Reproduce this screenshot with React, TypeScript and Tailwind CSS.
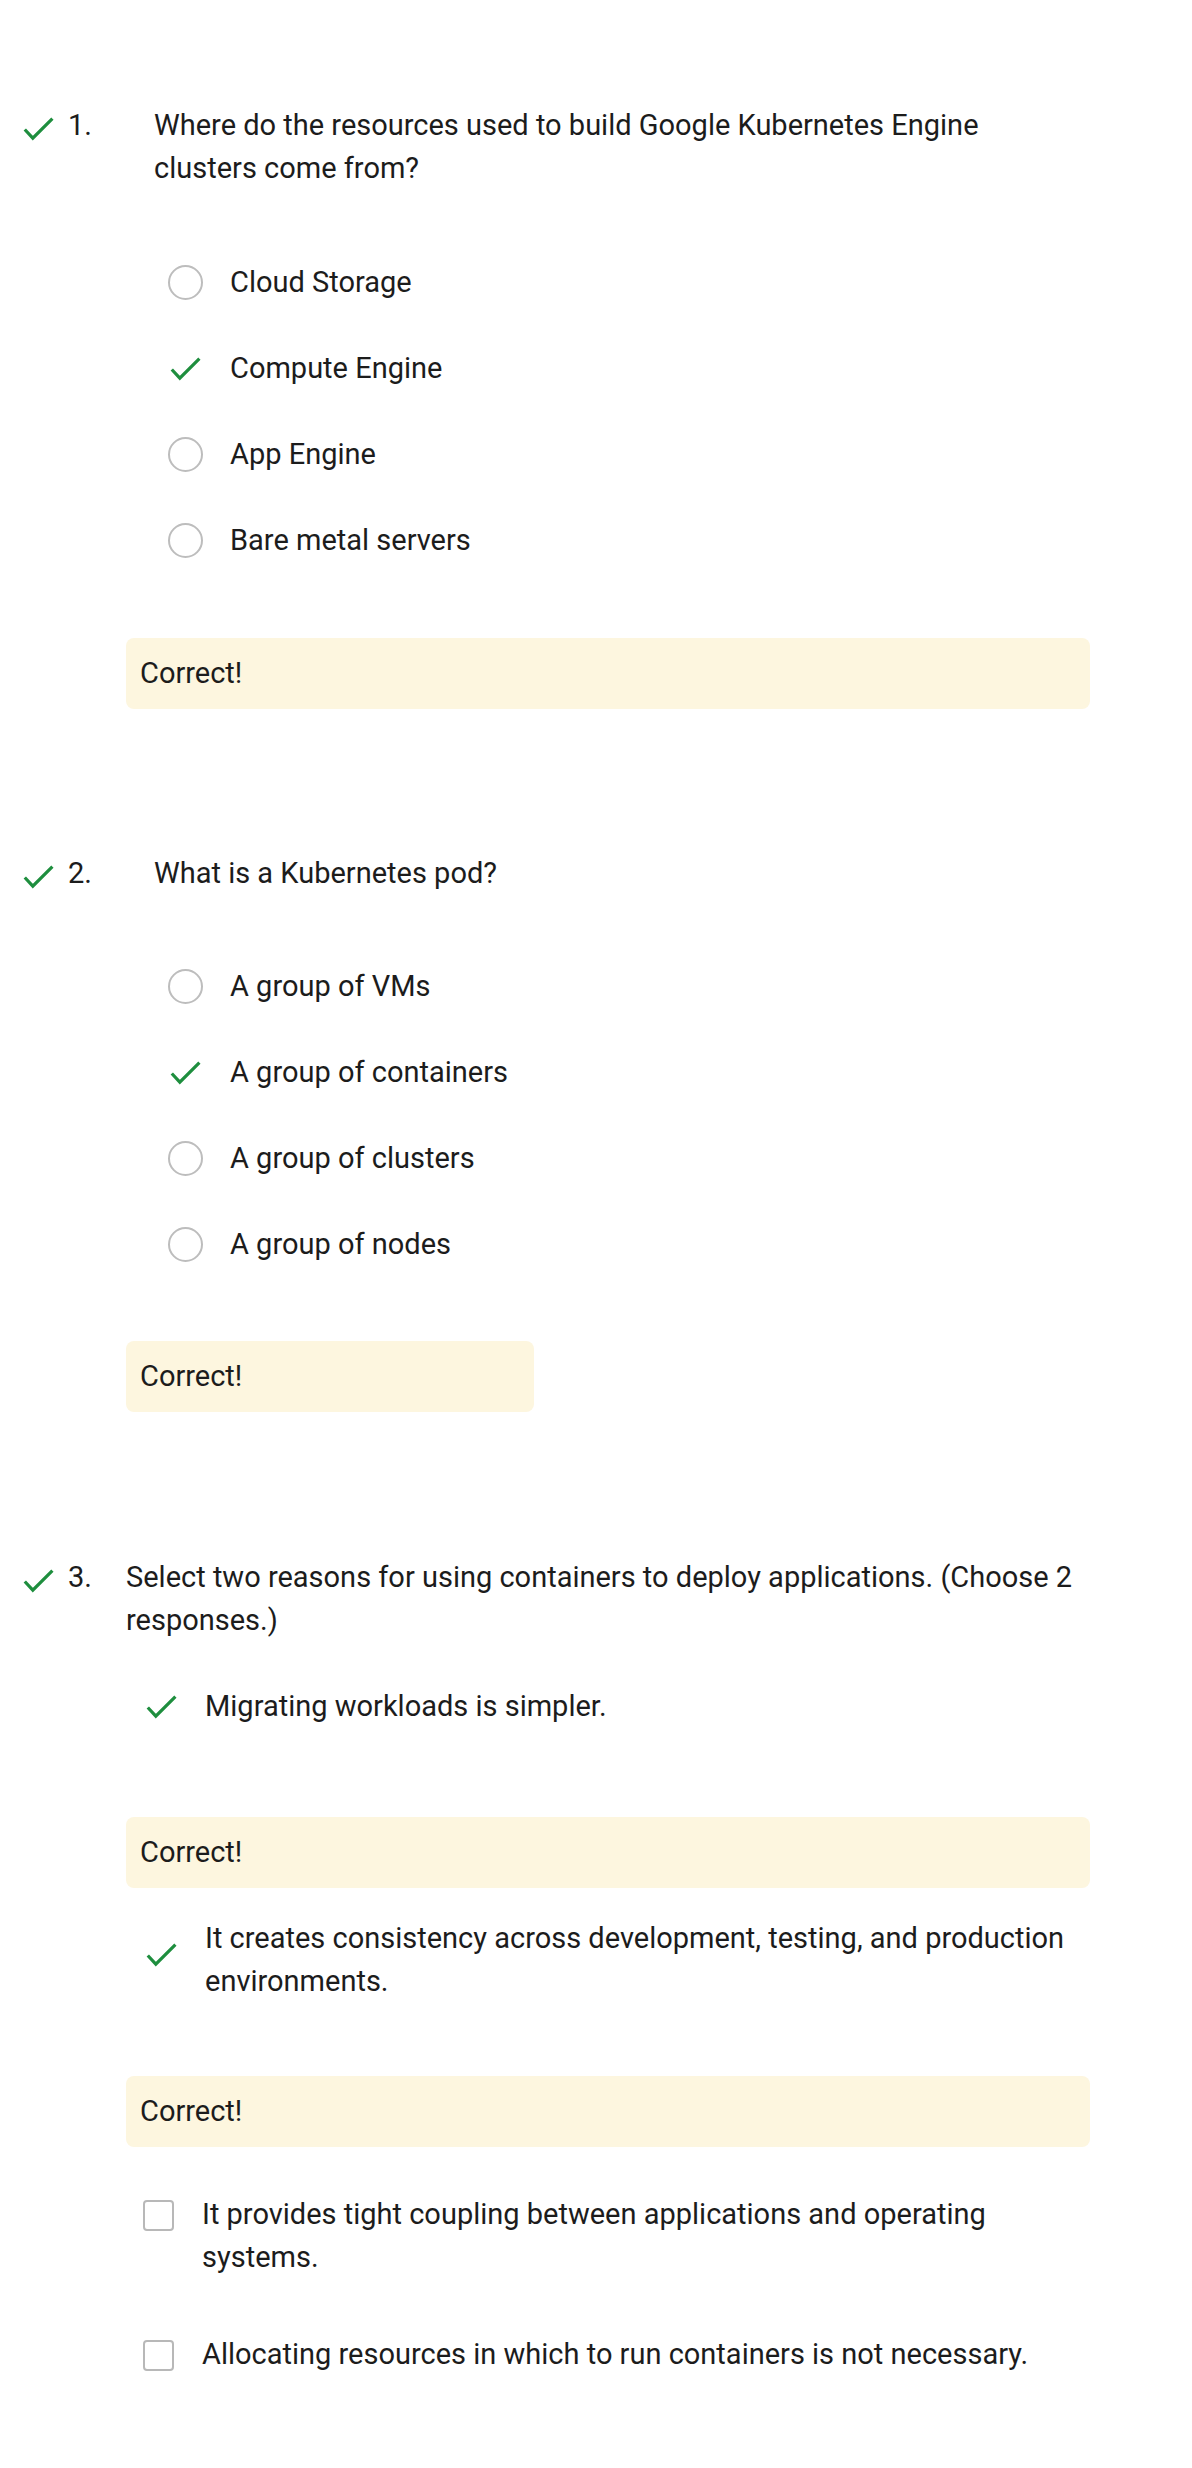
import React from 'react';

const Check = ({ className = '' }: { className?: string }) => (
    <svg className={className} width="31" height="24" viewBox="0 0 31 24" fill="none">
        <polyline points="1.8,12.5 9.8,21.2 29.4,1.6" stroke="#1e8e3e" strokeWidth="3.2" strokeLinecap="butt" strokeLinejoin="miter" />
    </svg>
);

const Radio = () => (
    <div className="w-[35px] h-[35px] rounded-full border-[2.5px] border-[#bdbdbd] shrink-0"></div>
);

const Box = () => (
    <div className="w-[31px] h-[31px] rounded-[4px] border-[2.5px] border-[#b8b8b8] shrink-0"></div>
);

const Feedback = ({ width, mt }: { width: string; mt: string }) => (
    <div className={`ml-[126px] ${width} ${mt} h-[71px] rounded-[8px] bg-[#fdf6df] flex items-center px-[14px]`}>
        Correct!
    </div>
);

interface RadioOption {
    text: string;
    correct?: boolean;
}

const RadioList = ({ options, mt }: { options: RadioOption[]; mt: string }) => (
    <div className={`ml-[168px] ${mt}`}>
        {options.map((o) => (
            <div key={o.text} className="h-[86px] flex items-center">
                <div className="w-[35px] flex items-center justify-center">
                    {o.correct ? <Check className="mt-[2px]" /> : <Radio />}
                </div>
                <span className="ml-[27px]">{o.text}</span>
            </div>
        ))}
    </div>
);

const App: React.FC = () => {
    return (
        <div className="bg-white w-[1192px] min-h-[2468px] font-['Roboto','Liberation_Sans',sans-serif] text-[29px] leading-[43px] text-[#1c1c1c] pb-[90px]">

            {/* Question 1 */}
            <div className="flex pt-[104px]">
                <div className="w-[154px] shrink-0 flex items-start">
                    <Check className="ml-[23px] mt-[13px]" />
                    <span className="ml-[14px]">1.</span>
                </div>
                <p className="w-[900px]">Where do the resources used to build Google Kubernetes Engine clusters come from?</p>
            </div>
            <RadioList
                mt="mt-[49px]"
                options={[
                    { text: 'Cloud Storage' },
                    { text: 'Compute Engine', correct: true },
                    { text: 'App Engine' },
                    { text: 'Bare metal servers' },
                ]}
            />
            <Feedback width="w-[964px]" mt="mt-[55px]" />

            {/* Question 2 */}
            <div className="flex mt-[143px]">
                <div className="w-[154px] shrink-0 flex items-start">
                    <Check className="ml-[23px] mt-[13px]" />
                    <span className="ml-[14px]">2.</span>
                </div>
                <p className="w-[900px]">What is a Kubernetes pod?</p>
            </div>
            <RadioList
                mt="mt-[48px]"
                options={[
                    { text: 'A group of VMs' },
                    { text: 'A group of containers', correct: true },
                    { text: 'A group of clusters' },
                    { text: 'A group of nodes' },
                ]}
            />
            <Feedback width="w-[408px]" mt="mt-[54px]" />

            {/* Question 3 */}
            <div className="flex mt-[144px]">
                <div className="w-[126px] shrink-0 flex items-start">
                    <Check className="ml-[23px] mt-[13px]" />
                    <span className="ml-[14px]">3.</span>
                </div>
                <p className="w-[964px]">Select two reasons for using containers to deploy applications. (Choose 2 responses.)</p>
            </div>

            <div className="flex items-center ml-[146px] mt-[43px]">
                <Check className="shrink-0" />
                <span className="ml-[28px]">Migrating workloads is simpler.</span>
            </div>
            <Feedback width="w-[964px]" mt="mt-[89px]" />

            <div className="flex items-center ml-[146px] mt-[29px]">
                <Check className="shrink-0 -mt-[10px]" />
                <span className="ml-[28px] w-[885px]">It creates consistency across development, testing, and production environments.</span>
            </div>
            <Feedback width="w-[964px]" mt="mt-[73px]" />

            <div className="flex items-start ml-[143px] mt-[46px]">
                <div className="mt-[7px]"><Box /></div>
                <span className="ml-[28px] w-[888px]">It provides tight coupling between applications and operating systems.</span>
            </div>

            <div className="flex items-start ml-[143px] mt-[54px]">
                <div className="mt-[7px]"><Box /></div>
                <span className="ml-[28px] w-[888px]">Allocating resources in which to run containers is not necessary.</span>
            </div>
        </div>
    );
};

export default App;
